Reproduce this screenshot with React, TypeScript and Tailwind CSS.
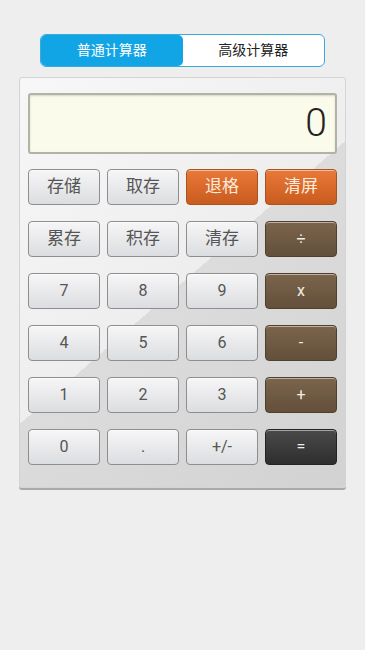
import React from "react";

type Kind = "gray" | "orange" | "brown" | "dark";

const kindClass: Record<Kind, string> = {
  gray: "bg-[linear-gradient(to_bottom,#f6f6f7,#dcdde0)] border-[#8e8e8e] text-[#555]",
  orange: "bg-[linear-gradient(to_bottom,#e9793a,#c95b1e)] border-[#a9541f] text-[#fdebdc]",
  brown: "bg-[linear-gradient(to_bottom,#7b644c,#63503b)] border-[#4f3f2e] text-[#f3ece2]",
  dark: "bg-[linear-gradient(to_bottom,#4a4a4a,#2e2e2e)] border-[#232323] text-[#eeeeee]",
};

function Key({ label, kind = "gray", big = false }: { label: string; kind?: Kind; big?: boolean }) {
  return (
    <div
      className={`h-[36px] rounded-[4px] border flex items-center justify-center shadow-[inset_0_1px_0_rgba(255,255,255,0.5)] ${kindClass[kind]} ${big ? "text-[17px]" : "text-[16px]"}`}
    >
      {label}
    </div>
  );
}

const rows: { label: string; kind?: Kind; big?: boolean }[][] = [
  [
    { label: "存储", big: true },
    { label: "取存", big: true },
    { label: "退格", kind: "orange", big: true },
    { label: "清屏", kind: "orange", big: true },
  ],
  [
    { label: "累存", big: true },
    { label: "积存", big: true },
    { label: "清存", big: true },
    { label: "÷", kind: "brown" },
  ],
  [{ label: "7" }, { label: "8" }, { label: "9" }, { label: "x", kind: "brown" }],
  [{ label: "4" }, { label: "5" }, { label: "6" }, { label: "-", kind: "brown" }],
  [{ label: "1" }, { label: "2" }, { label: "3" }, { label: "+", kind: "brown" }],
  [{ label: "0" }, { label: "." }, { label: "+/-" }, { label: "=", kind: "dark" }],
];

export default function App() {
  return (
    <div
      className="w-[365px] h-[650px] bg-[#eeeeee] flex flex-col items-center"
      style={{ fontFamily: "Roboto, 'Noto Sans CJK SC', sans-serif" }}
    >
      <div className="mt-[34px] w-[285px] h-[33px] flex rounded-[6px] border border-[#3aa9dc] bg-white overflow-hidden text-[14px]">
        <div className="flex-1 bg-[#12a5e6] text-white flex items-center justify-center rounded-r-[5px]">
          普通计算器
        </div>
        <div className="flex-1 text-[#222] flex items-center justify-center">高级计算器</div>
      </div>

      <div className="mt-[10px] w-[327px] rounded-[3px] border border-[#d4d4d4] bg-[linear-gradient(139deg,#f7f7f7_0%,#eeeeee_50%,#dcdcdc_50%,#d2d2d2_100%)] shadow-[0_2px_0_#a9a9a9] px-[8px] pt-[15px] pb-[22px]">
        <div className="h-[61px] rounded-[3px] border-2 border-[#b2b2a6] bg-[#fbfbec] shadow-[inset_0_1px_2px_rgba(0,0,0,0.15)] flex items-center justify-end pr-[8px]">
          <span className="text-[39px] leading-none text-[#222] font-light">0</span>
        </div>
        <div className="mt-[15px] flex flex-col gap-[16px]">
          {rows.map((r, i) => (
            <div key={i} className="grid grid-cols-4 gap-[7px]">
              {r.map((k, j) => (
                <Key key={j} label={k.label} kind={k.kind} big={k.big} />
              ))}
            </div>
          ))}
        </div>
      </div>
    </div>
  );
}
